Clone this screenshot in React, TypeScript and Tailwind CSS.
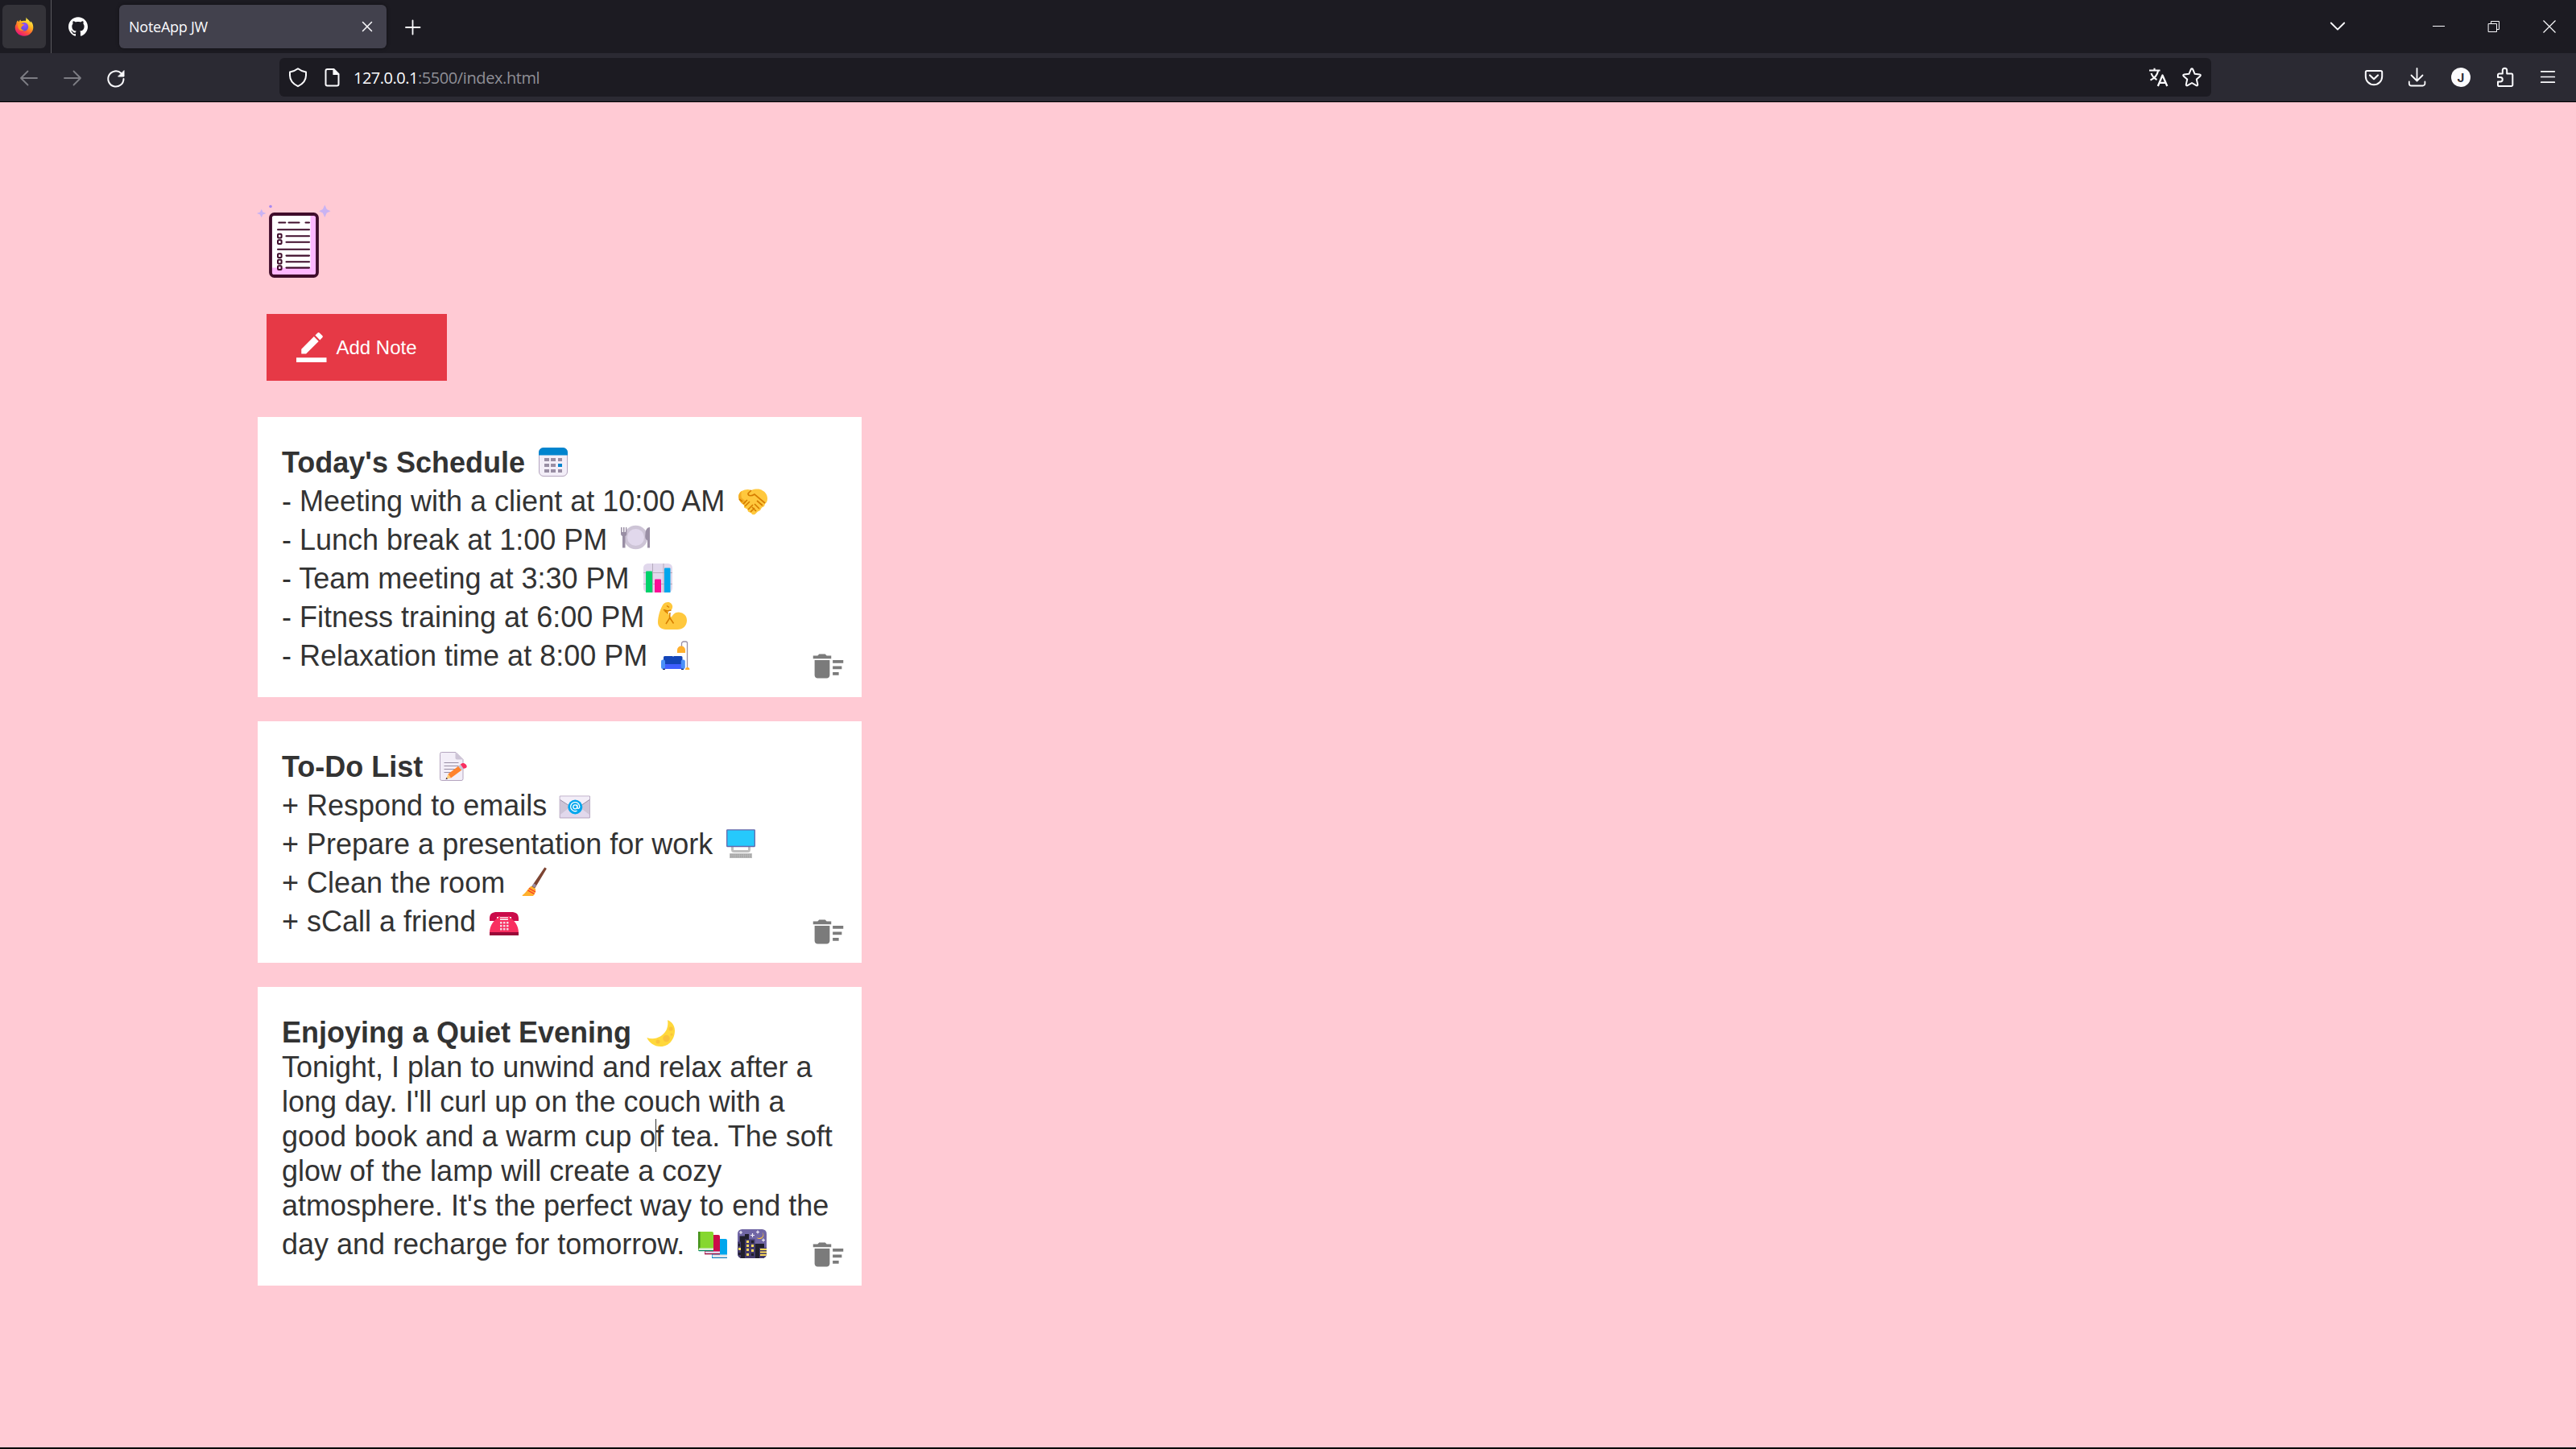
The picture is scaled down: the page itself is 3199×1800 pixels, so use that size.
import React from "react";

type ArtProps = { children: React.ReactNode };

/* ---------- browser chrome ---------- */

function Glyph({ children, className = "" }: { children: React.ReactNode; className?: string }) {
  return (
    <svg
      viewBox="0 0 24 24"
      className={`h-6 w-6 shrink-0 overflow-visible ${className}`}
      fill="none"
      stroke="#fbfbfe"
      strokeWidth="1.8"
      strokeLinecap="round"
      strokeLinejoin="round"
    >
      {children}
    </svg>
  );
}

function FirefoxLogo() {
  return (
    <svg viewBox="0 0 24 24" className="h-6 w-6">
      <defs>
        <linearGradient id="ffBody" x1="0.8" y1="0.1" x2="0.3" y2="1">
          <stop offset="0" stopColor="#fff44f" />
          <stop offset="0.35" stopColor="#ffb21f" />
          <stop offset="0.65" stopColor="#ff5a36" />
          <stop offset="1" stopColor="#e8107f" />
        </linearGradient>
        <radialGradient id="ffGlobe" cx="0.6" cy="0.3" r="0.8">
          <stop offset="0" stopColor="#9a4cff" />
          <stop offset="1" stopColor="#4a4fd8" />
        </radialGradient>
      </defs>
      <path
        d="M14.6.6c-.4 2 .1 3.300-1 4.500-1.500-.6-3.500-.5-5 .2C8 4.900 7.600 4.300 7.400 3.400 6.500 4 5.900 4.900 5.700 6 4.800 5.900 4.300 5 4.200 4.200 2.900 5.300 2.300 7 2.200 8.700 1.200 10 .7 11.500.7 13c0 6 4.800 10.700 11.200 10.700S23.300 18.800 23.300 12.900c0-3.500-1.300-6.200-3.600-7.600.3.900.4 1.500.4 2.200C18.500 4 15.600 3.200 14.600.6z"
        fill="url(#ffBody)"
      />
      <circle cx="12" cy="12.300" r="5.200" fill="url(#ffGlobe)" />
      <path d="M4.200 8.500c2-.9 4-.7 5 .3l2.700.3c.3 1.200-.8 1.700-2.300 2.300-.6.300-.5 1.100-1.200 1.600-.9 2 1.500 3.600 4 3-2.500 2-6.700 1-7.600-2-.5-2-.9-3.500-.6-5.500z" fill="#ff9a1f" />
    </svg>
  );
}

function GithubLogo() {
  return (
    <svg viewBox="0 0 24 24" className="h-6 w-6" fill="#ffffff">
      <path d="M12 .297c-6.630 0-12 5.373-12 12 0 5.303 3.438 9.800 8.205 11.385.6.113.82-.258.82-.577 0-.285-.01-1.040-.015-2.040-3.338.724-4.042-1.610-4.042-1.610C4.422 18.070 3.633 17.700 3.633 17.700c-1.087-.744.084-.729.084-.729 1.205.084 1.838 1.236 1.838 1.236 1.070 1.835 2.809 1.305 3.495.998.108-.776.417-1.305.76-1.605-2.665-.3-5.466-1.332-5.466-5.930 0-1.310.465-2.380 1.235-3.220-.135-.303-.54-1.523.105-3.176 0 0 1.005-.322 3.300 1.230.96-.267 1.980-.399 3-.405 1.020.006 2.040.138 3 .405 2.280-1.552 3.285-1.230 3.285-1.230.645 1.653.24 2.873.12 3.176.765.84 1.230 1.910 1.230 3.220 0 4.610-2.805 5.625-5.475 5.920.42.36.81 1.096.81 2.220 0 1.606-.015 2.896-.015 3.286 0 .315.21.69.825.57C20.565 22.092 24 17.592 24 12.297c0-6.627-5.373-12-12-12" />
    </svg>
  );
}

function TabBar() {
  return (
    <div className="flex h-[66px] shrink-0 items-center bg-[#1c1b22] pr-[21px] pl-[3px]">
      <div className="flex h-[54px] w-[54px] items-center justify-center rounded-md bg-[#343339]">
        <FirefoxLogo />
      </div>
      <div className="ml-1.5 h-full w-px bg-[#5b5a60]" />
      <div className="ml-[21px]">
        <GithubLogo />
      </div>
      <div className="ml-[39px] flex h-[54px] w-[332px] items-center justify-between rounded-md bg-[#42414d] pr-[12px] pl-[12px] shadow-[0_0_4px_rgba(0,0,0,0.4)]">
        <span className="font-['Open_Sans',sans-serif] text-[18px] leading-6 tracking-[-0.25px] text-[#fbfbfe]">NoteApp JW</span>
        <Glyph>
          <path d="M6.500 6.500l11 11M17.500 6.500l-11 11" strokeWidth="1.500" />
        </Glyph>
      </div>
      <Glyph className="ml-[21px]">
        <path d="M11.500 4.500v17M3 13h17.500" strokeWidth="1.800" />
      </Glyph>
      <Glyph className="ml-auto">
        <path d="M3.800 7.500l8.200 8.200 8.200-8.200" strokeWidth="1.900" />
      </Glyph>
      <Glyph className="ml-[102px]">
        <path d="M4 11.500h15" strokeWidth="1" strokeLinecap="butt" />
      </Glyph>
      <Glyph className="ml-[44px]">
        <path d="M5.500 8.500h10v10h-10zM8.500 8.500v-3h10v10h-3" strokeWidth="1" strokeLinejoin="miter" />
      </Glyph>
      <Glyph className="ml-[45px]">
        <path d="M4.500 4.500l15 15M19.500 4.500l-15 15" strokeWidth="1.200" strokeLinecap="butt" />
      </Glyph>
    </div>
  );
}

function NavBar() {
  return (
    <div className="flex h-[61px] shrink-0 items-center border-b border-black bg-[#2b2a33] pr-[23px] pl-6">
      <Glyph className="opacity-40">
        <path d="M22 13H2M10.500 4.500L2 13l8.500 8.500" />
      </Glyph>
      <Glyph className="ml-[30px] opacity-40">
        <path d="M2 13h20M13.500 4.500L22 13l-8.500 8.500" />
      </Glyph>
      <Glyph className="ml-[30px]">
        <path d="M21.500 14A9.600 9.600 0 1 1 18.500 7" strokeWidth="2" />
        <path d="M22 4v7h-7z" fill="#fbfbfe" strokeWidth="1" />
      </Glyph>
      <div className="ml-[191px] flex h-12 w-[2399px] items-center rounded-md bg-[#1c1b22] pr-3 pl-[11px]">
        <Glyph>
          <path d="M12 1.200c3 2.300 6 3.500 10 4.300v4.200c0 6-3.600 10.300-10 13.500-6.400-3.200-10-7.500-10-13.500V5.500c4-.8 7-2 10-4.300z" strokeWidth="2" />
        </Glyph>
        <Glyph className="ml-[18px]">
          <path d="M6.500 2h8l6 6v12.500a2 2 0 0 1-2 2h-12a2 2 0 0 1-2-2V4a2 2 0 0 1 2-2z" strokeWidth="2" />
          <path d="M14 2v6.500h6.500z" fill="#fbfbfe" strokeWidth="1.200" />
        </Glyph>
        <span className="ml-[15px] pt-0.5 font-['Open_Sans',sans-serif] text-[20px] leading-7 tracking-[-0.5px] whitespace-nowrap text-[#fbfbfe]">
          127.0.0.1<span className="tracking-[-0.4px] text-[#8f8f96]">:5500/index.html</span>
        </span>
        <Glyph className="ml-auto">
          <path d="M1 3.500h13.500M7.500.8v2.700M3.500 7c1.500 4.500 4 6.500 7 8M12 4c-1 5.500-4 9-9.500 11.500" strokeWidth="2.100" strokeLinecap="butt" />
          <path d="M11.800 23L17.500 9.500 23.300 23M13.500 18.800h8" strokeWidth="2.300" strokeLinecap="butt" />
        </Glyph>
        <Glyph className="ml-[18px]">
          <path d="M12 1.300c.6 0 .9.300 1.200.9l2.400 5.600 6 .6c1.200.1 1.600 1.200.8 2l-4.600 4.100 1.400 6.400c.2 1.200-.8 1.900-1.800 1.300L12 19l-5.400 3.200c-1 .6-2-.1-1.800-1.300l1.400-6.400-4.600-4.100c-.8-.8-.4-1.900.8-2l6-.6 2.400-5.600c.3-.6.6-.9 1.200-.9z" strokeWidth="2" />
        </Glyph>
      </div>
      <Glyph className="ml-auto">
        <path d="M3.500 4h17a1.700 1.700 0 0 1 1.700 1.700V11a10.200 10.200 0 0 1-20.400 0V5.700A1.700 1.700 0 0 1 3.500 4z" strokeWidth="2" />
        <path d="M7 9.500l5 4.700 5-4.700" strokeWidth="2.200" />
      </Glyph>
      <Glyph className="ml-[30px]">
        <path d="M11.500 1v15M4.500 9.500l7 7 7-7" />
        <path d="M1.800 17.500v2.200a2.800 2.800 0 0 0 2.800 2.800h14a2.800 2.800 0 0 0 2.800-2.800v-2.200" />
      </Glyph>
      <div className="ml-[30px] flex h-6 w-6 items-center justify-center rounded-full bg-[#fbfbfe] font-['Inter',sans-serif] text-[15px] leading-none font-bold text-[#2b2a33]">
        J
      </div>
      <Glyph className="ml-[31px]">
        <path
          d="M3 9.500V9a1.600 1.600 0 0 1 1.600-1.600h4.200V3.500a2.700 2.700 0 0 1 5.400 0v3.900H20A1.600 1.600 0 0 1 21.300 9v12.400A1.600 1.600 0 0 1 19.700 23H4.600A1.600 1.600 0 0 1 3 21.400v-4h3a2.700 2.700 0 0 0 0-5.500H3z"
          strokeWidth="2"
        />
      </Glyph>
      <Glyph className="ml-[29px]">
        <path d="M3.700 4.800h16.600M3.700 11.500h16.600M3.700 18.200h16.600" strokeWidth="1.700" />
      </Glyph>
    </div>
  );
}

/* ---------- inline emoji art, 36 x 36 ---------- */

function Art({ children }: ArtProps) {
  return (
    <svg viewBox="0 0 36 36" className="mr-[6px] ml-[7px] inline-block h-9 w-9 overflow-visible align-[-5px]">
      {children}
    </svg>
  );
}

const Calendar = () => (
  <Art>
    <rect x="0.500" y="0.500" width="35" height="35" rx="5.500" fill="#f3eef8" stroke="#b4a5bf" />
    <path d="M0 9.500V6a6 6 0 0 1 6-6h24a6 6 0 0 1 6 6v3.500z" fill="#0084ce" />
    <g fill="#998ea4">
      <path d="M7 13h6v4H7zM15 13h6v4h-6zM24 13h5v4h-5zM7 20h6v4H7zM15 20h6v4h-6zM7 27h6v4H7zM15 27h6v4h-6zM24 27h5v4h-5z" />
    </g>
    <path d="M24 20h5v4h-5z" fill="#0084ce" />
  </Art>
);

const Handshake = () => (
  <Art>
    <path d="M4 6c4-2 8-3 12-1 5-2 11-2 14 .500 4 2 6 6 6 10 0 3-1 5-3 6.500l-1 3-3 1.500-2 3.500-3 1.500-3 3c-2 1.500-4 1-5-1l-4-2-1-3-4-2v-3c-4-3-7-6-7-10.500C0 10 1.500 7.500 4 6z" fill="#ffc83d" />
    <path d="M4 6C1 8 0 11 .300 14c.3 4 3 7 6.700 9.500l3-4-6-5c-1-3-.5-6 0-8.500z" fill="#f3ad25" />
    <path d="M16 5l-4 4c0 4 5 3 8 1l13 11M6 22l5-5M8 25l6-6M12 29l6-6M15 32l5-5M23 18l7 6M20 22l6 6M17 26l5 5M1 16l4 3" stroke="#d67d00" strokeWidth="1.700" fill="none" />
  </Art>
);

const Plate = () => (
  <Art>
    <circle cx="18.500" cy="15.500" r="14.800" fill="#cdc4d6" />
    <circle cx="18.500" cy="15.500" r="10.500" fill="#e1d8ec" />
    <path d="M0 3h1.500v6H3V3h1.500v6H6V3h1.300v8c0 1.500-.8 2.500-1.800 3v14.500H2V14c-1.200-.5-2-1.500-2-3z" fill="#998ea4" />
    <path d="M36 3v25.500h-3V19c-3-1-3-4-2.500-8 .3-5 2-8 5.500-8z" fill="#998ea4" />
  </Art>
);

const Chart = () => (
  <Art>
    <rect width="36" height="36" rx="5.500" fill="#e1d8ec" />
    <path d="M11.500 0v36M25 0v36M0 11.500h36M0 25.500h36" stroke="#b4acbc" />
    <path d="M3 10.500q0-1 1-1h6q1 0 1 1V36H3z" fill="#00d26a" />
    <path d="M14 20.500q0-1 1-1h6q1 0 1 1V36h-8z" fill="#fc0d97" />
    <path d="M26 6.500q0-1 1-1h5.500q1 0 1 1V36H26z" fill="#00a6ed" />
  </Art>
);

const Muscle = () => (
  <Art>
    <path d="M11 .300c4-1 7 2 7.200 5.200 0 3-1.500 5-4.700 5-1 3 0 5 1.500 7l2 1c2-4 5-6 9-6 5.500.5 10 4 10 10 0 7-5 11.500-12 11.500H10C4 34 0 30.500 0 25 0 17 3 9 6 3.500 7 1.500 9 .6 11 .300z" fill="#ffc83d" />
    <path d="M7 9.500l5 1.500 4.500-1M8.500 11l4 3M11 4.500l3 2M15 13l-.5 7-4.500 7M14.500 19l5 7.500" stroke="#d67d00" strokeWidth="1.500" fill="none" />
  </Art>
);

const Couch = () => (
  <Art>
    <path d="M25.500 7V3.500a2.500 2.500 0 0 1 2.500-2.500h2.500a2 2 0 0 1 2 2v31" fill="none" stroke="#998ea4" strokeWidth="1.300" />
    <path d="M20 15v-3.500a5 5 0 0 1 10 0V15z" fill="#ffb02e" />
    <path d="M30 36q0-3 2.700-3t2.700 3z" fill="#ffb02e" />
    <path d="M3 22v-1.500q0-1.500 1.500-1.500H14l1 .8 1-.8h9q1.500 0 1.500 1.500V31H3z" fill="#1345b7" />
    <path d="M3 29h24v6H3z" fill="#3f5fff" />
    <rect x="0" y="23.500" width="5" height="11.500" rx="2" fill="#4a90f8" />
    <rect x="24.800" y="23.500" width="5" height="11.500" rx="2" fill="#4a90f8" />
    <path d="M2 34.800h3V36H2zM25 34.800h3V36h-3z" fill="#1b2a6b" />
  </Art>
);

const Memo = () => (
  <Art>
    <g transform="translate(3 0)">
      <path d="M3.500.500H21L30 9.500v24q0 2-2 2H3.500q-2 0-2-2v-31q0-2 2-2z" fill="#f3eef8" stroke="#b4a5bf" />
      <path d="M20.500.500V7.500q0 2 2 2H30z" fill="#cdc4d6" />
      <path d="M6.500 13.500h18M6.500 17.500h18M6.500 21.500h14M6.500 25.500h9" stroke="#998ea4" strokeWidth="1.200" />
      <path d="M9 33.800l2.500-6.300 3.500 5z" fill="#ffce7c" />
      <path d="M11.500 27.500l13-10 4 5L15 32.500z" fill="#ff822d" />
      <path d="M24 17.800l3-2.300 4 5-3 2.300z" fill="#cdc4d6" />
      <path d="M26.800 15.600c3-4 9 0 7.700 3.400-.5 1-2 1.500-3.700 2z" fill="#f92f60" />
      <path d="M8.500 34.200l1-2.500 1.500 1.700z" fill="#402a32" />
    </g>
  </Art>
);

const Email = () => (
  <Art>
    <path d="M-.8 7h37.200v27H-.8z" fill="#e1d8ec" stroke="#b4a5bf" />
    <path d="M-.3 11.500L12 20.500-.300 30zM36 11.500L23.500 20.500 36 30z" fill="#cdc4d6" />
    <path d="M-.3 7.500H36v4L23 20H12L-.300 11.500z" fill="#f3eef8" />
    <path d="M-.5 11.500L11 19M36 11.500L25 19" stroke="#998ea4" />
    <circle cx="18.300" cy="20.500" r="9" fill="#00a6ed" />
    <circle cx="18.300" cy="20.300" r="2.500" fill="none" stroke="#fff" strokeWidth="1.300" />
    <path d="M20.800 17.500v3.300c0 2.400 3 2 3-.8a5.600 5.600 0 1 0-3.200 5.200" fill="none" stroke="#fff" strokeWidth="1.300" />
  </Art>
);

const Computer = () => (
  <Art>
    <path d="M7.500 22v3.500q0 2 2 2h17q2 0 2-2V22" fill="none" stroke="#bebebe" strokeWidth="3" />
    <rect x="0.700" y="0.900" width="34.600" height="20.600" rx="0.500" fill="#26c9fc" stroke="#6768ab" strokeWidth="1.300" />
    <rect x="4" y="30" width="28" height="6" rx="0.600" fill="#bebebe" />
    <path d="M5 32h26M5 34.300h26" stroke="#8d8d8d" strokeDasharray="1.600 0.800" />
  </Art>
);

const Broom = () => (
  <Art>
    <path d="M32.500.500l1.300.800-14.500 24-2.500-1.500z" stroke="#7d4533" strokeWidth="1.600" fill="#7d4533" />
    <path d="M16.500 22.500l3.500 2.200 2-3.300-3-2z" fill="#998ea4" />
    <path d="M15.800 22.800l5.200 3.200c.8 3-.5 6.500-3 9H5.500c-1 0-1.200-.8-.5-1.300 5-3 6.500-8.500 10.800-10.900z" fill="#ffb02e" />
    <path d="M13 25.500l8 4.500M11.500 28l8 4.500" stroke="#f8312f" strokeWidth="1.300" />
  </Art>
);

const Phone = () => (
  <Art>
    <path d="M0 15C0 9 3.500 7 9 7h18c5.500 0 9 2 9 8v3h-9v-5H9v5H0z" fill="#ca0b4a" />
    <path d="M11 12h2v2h10v-2h2v2c6 3 11 10 11 18.500H0C0 24 5 17 11 14z" fill="#f92f60" />
    <path d="M0 32h36v4H0z" fill="#990838" />
    <g fill="#f4d8e2">
      <path d="M13 15h10v2H13zM13 19h2.500v2.500H13zM17 19h2.500v2.500H17zM21 19h2.500v2.500H21zM13 23h2.500v2.500H13zM17 23h2.500v2.500H17zM21 23h2.500v2.500H21zM13 27h2.500v2.500H13zM17 27h2.500v2.500H17zM21 27h2.500v2.500H21z" />
    </g>
  </Art>
);

const Moon = () => (
  <Art>
    <g transform="translate(2 0)">
      <path d="M26 3.200c6 2 9 7.500 9 13C35 26 28.500 36 17.500 36 9 36 3 31 .300 25c10 3.500 19-1 24-9 2-4 2.500-8.500 1.700-12.800z" fill="#ffd83b" />
      <circle cx="24.500" cy="26" r="4.200" fill="#f9c23c" />
      <circle cx="30" cy="14" r="2.600" fill="#f9c23c" />
      <circle cx="14" cy="30" r="2.500" fill="#f9c23c" />
      <circle cx="31" cy="21" r="1.500" fill="#f9c23c" />
    </g>
  </Art>
);

const Books = () => (
  <Art>
    <path d="M17 12h17q2 0 2 2v22H19q-2 0-2-2z" fill="#00a6ed" />
    <path d="M17.500 31.500H36v3.500H18z" fill="#e1e5ea" />
    <path d="M17 35h19v1H17z" fill="#0074ba" />
    <path d="M8 7h17q2 0 2 2v22H10q-2 0-2-2z" fill="#ca0b4a" />
    <path d="M8.500 27.500H27V30H9z" fill="#e1d8ec" />
    <path d="M8 30h19v1.300H8z" fill="#990838" />
    <path d="M0 3h17q2 0 2 2v22H2q-2 0-2-2z" fill="#86d72f" />
    <path d="M0 3h2.500v20L0 25z" fill="#44911b" />
    <path d="M1 23.500h18V26H1z" fill="#dcefdc" />
    <path d="M0 26h19v1.200H1z" fill="#008463" />
  </Art>
);

const NightCity = () => (
  <Art>
    <defs>
      <clipPath id="cityClip">
        <rect width="36" height="36" rx="5.500" />
      </clipPath>
    </defs>
    <g clipPath="url(#cityClip)">
      <path d="M0 0h36v36H0z" fill="#7066a5" />
      <path d="M2.500 8.500H9V6h5v30H2.500zM21.500 18H33v18H21.500z" fill="#211f2d" />
      <path d="M0 15.500h4V36H0zM9 12.500h12.500V36H9zM27 23h9v13h-9z" fill="#433b6b" />
      <path d="M11 14h3v3h-3zM17 19h3v3h-3zM11 24h3v3h-3zM11 30h3v3h-3zM17 25h3v3h-3zM1 23h3v3H1zM11 19h3v3h-3zM28 24h8v2h-8zM28 27.500h8v2h-8zM28 31h8v2h-8z" fill="#fcd95b" />
      <path d="M17 14h3v3h-3zM17 30h3v3h-3zM1 18h2v3H1zM1 29h3v3H1z" fill="#211f2d" />
      <path d="M30.500 3.500c3 4 0 9-7 7 4 3.500 9 .5 8.800-3.500 0-1.500-.8-2.800-1.800-3.500z" fill="#f9c23c" />
      <path d="M4 2v4M2 4h4M18.500 5v5M16 7.500h5M25 1.500v4M23 3.500h4M32 11.500v4M30 13.500h4" stroke="#f3eef8" strokeWidth="1.200" />
    </g>
  </Art>
);

/* ---------- page ---------- */

function Logo() {
  return (
    <svg viewBox="0 0 90 90" className="h-[90px] w-[90px] overflow-visible">
      <g fill="#c9b3f3">
        <path d="M4.700 9.800l1.800 3.700 4 1.500-4 1.500-1.800 3.700-1.800-3.700-4-1.500 4-1.500z" />
        <path d="M83.300 4.500l2.500 5.500 4.700 2.300-4.700 2.300-2.500 5.500-2.500-5.500-4.700-2.300 4.700-2.300z" />
        <circle cx="16" cy="6.500" r="1.800" fill="#a98af0" />
      </g>
      <rect x="16" y="16" width="58" height="77" rx="4.500" fill="#ffb8ff" />
      <path d="M18 17h47.500v65.500H18z" fill="#ffffff" />
      <rect x="16" y="16" width="58" height="77" rx="4.500" fill="none" stroke="#3f0d2b" strokeWidth="3.800" />
      <g stroke="#3f0d2b" strokeWidth="2.100" fill="none" strokeLinecap="round">
        <path d="M26.300 26.500h8M38.500 26.500h13M59.500 26.500h4.500M25 35.300h39M35.500 43.300h28.500M35.500 50.700h28.500M25 59.700h39M35.500 67.600h28.500M35.500 75.200h28.500M35.500 82.600h28.500" />
        <g strokeWidth="2">
          <rect x="25" y="40.800" width="4.600" height="4.800" rx="1" />
          <rect x="25" y="48.300" width="4.600" height="4.800" rx="1" />
          <rect x="25" y="65.200" width="4.600" height="4.800" rx="1" />
          <rect x="25" y="72.700" width="4.600" height="4.800" rx="1" />
          <rect x="25" y="80.200" width="4.600" height="4.800" rx="1" />
        </g>
      </g>
    </svg>
  );
}

function Line({ children, bold = false }: { children: React.ReactNode; bold?: boolean }) {
  return <p className={`h-12 pt-[5px] leading-[44px] whitespace-nowrap ${bold ? "font-bold" : ""}`}>{children}</p>;
}

function PlainLine({ children }: { children: React.ReactNode }) {
  return <p className="h-[43px] leading-[43px] whitespace-nowrap">{children}</p>;
}

function Note({ children }: { children: React.ReactNode }) {
  return (
    <article className="relative w-[750px] bg-white p-[30px] text-[36px] text-[#333333]">
      {children}
      <svg viewBox="0 0 24 24" className="absolute right-[19px] bottom-[16px] h-[45px] w-[45px]" fill="#7b7b7b">
        <path d="M15 16h4v2h-4zm0-8h7v2h-7zm0 4h6v2h-6zM3 18c0 1.100.9 2 2 2h6c1.100 0 2-.9 2-2V8H3v10zM14 5h-3l-1-1H6L5 5H2v2h12z" />
      </svg>
    </article>
  );
}

export default function App() {
  return (
    <div className="flex h-[1800px] w-full flex-col overflow-hidden bg-[#ffcad4] font-['Liberation_Sans',Arial,sans-serif]">
      <TabBar />
      <NavBar />
      <main className="flex flex-1 flex-col items-start border-b-2 border-black pt-[123px] pl-[320px]">
        <Logo />
        <button className="mt-[50px] ml-[11px] flex h-[83px] w-[224px] shrink-0 items-center bg-[#e63946] pl-[37px] text-[24px] text-white">
          <svg viewBox="0 0 24 24" className="h-[37.500px] w-[37.500px]" fill="currentColor">
            <path d="M17.750 7L14 3.250l-10 10V17h3.750l10-10zm2.960-2.960c.39-.39.39-1.020 0-1.410L18.370.29c-.39-.39-1.020-.39-1.410 0L15 2.250 18.750 6l1.960-1.960zM0 20h24v4H0z" />
          </svg>
          <span className="ml-[12px]">Add Note</span>
        </button>
        <div className="mt-[45px] flex flex-col gap-[30px]">
          <Note>
            <Line bold>Today's Schedule <Calendar /></Line>
            <Line>- Meeting with a client at 10:00 AM <Handshake /></Line>
            <Line>- Lunch break at 1:00 PM <Plate /></Line>
            <Line>- Team meeting at 3:30 PM <Chart /></Line>
            <Line>- Fitness training at 6:00 PM <Muscle /></Line>
            <Line>- Relaxation time at 8:00 PM <Couch /></Line>
          </Note>
          <Note>
            <Line bold>To-Do List <Memo /></Line>
            <Line>+ Respond to emails <Email /></Line>
            <Line>+ Prepare a presentation for work <Computer /></Line>
            <Line>+ Clean the room <Broom /></Line>
            <Line>+ sCall a friend <Phone /></Line>
          </Note>
          <Note>
            <Line bold>Enjoying a Quiet Evening <Moon /></Line>
            <PlainLine>Tonight, I plan to unwind and relax after a</PlainLine>
            <PlainLine>long day. I'll curl up on the couch with a</PlainLine>
            <PlainLine>
              good book and a warm cup o
              <span className="-mr-px inline-block h-[41px] w-px bg-[#333333] align-[-7px]" />f tea. The soft
            </PlainLine>
            <PlainLine>glow of the lamp will create a cozy</PlainLine>
            <PlainLine>atmosphere. It's the perfect way to end the</PlainLine>
            <Line>
              day and recharge for tomorrow. <Books />
              <NightCity />
            </Line>
          </Note>
        </div>
      </main>
    </div>
  );
}
